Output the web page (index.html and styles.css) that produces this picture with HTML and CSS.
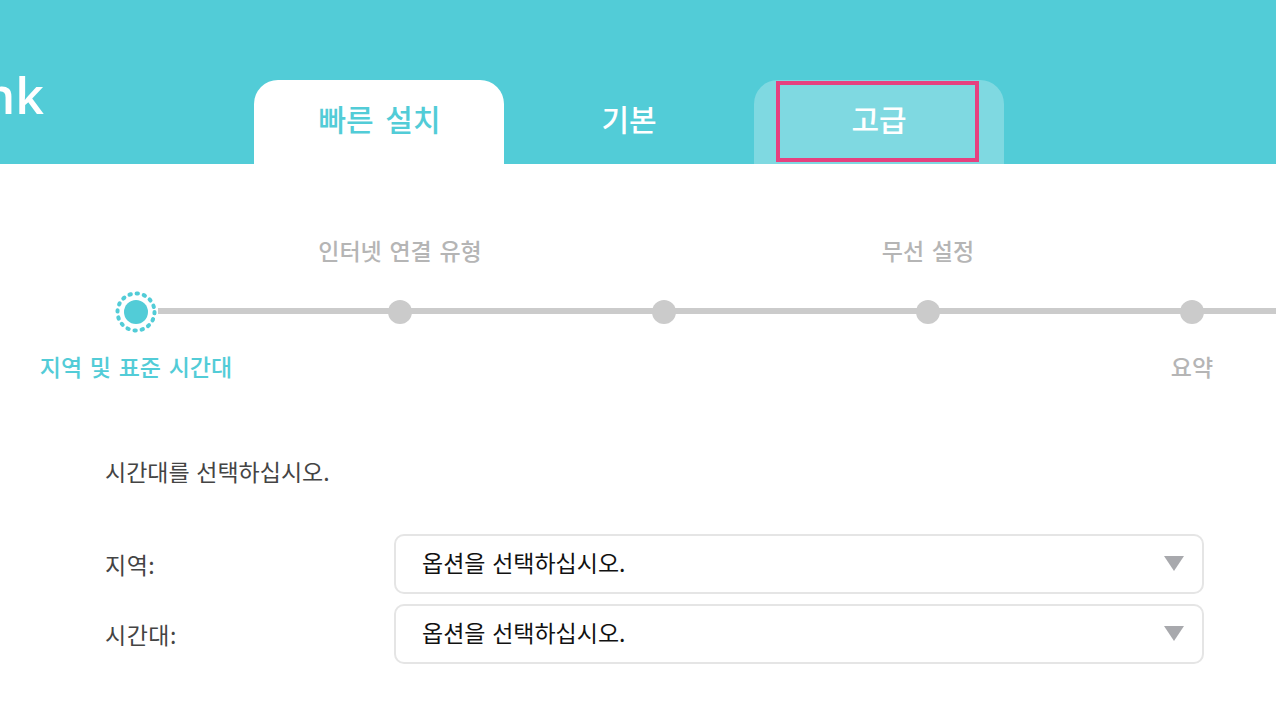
FILE: index.html
```html
<!doctype html>
<html>
    <head>
    <title>빠른 설치</title>
    <link rel="stylesheet" href="styles.css">
    </head>

    <body>
        <div id="header">
            <div class="logo-box"><span class="logo">link</span></div>
            <div class="tab tab-on">빠른 설치</div>
            <div class="tab">기본</div>
            <div class="tab tab-light">
                고급
                <div class="mark"></div>
            </div>
        </div>

        <div id="steps">
            <div class="step step-on">
                <div class="step-top"></div>
                <div class="step-line">
                    <svg class="ring" width="42" height="42" viewBox="0 0 42 42">
                        <circle cx="21" cy="21" r="18.5" fill="none" stroke="#52ccd7" stroke-width="4" stroke-linecap="round" stroke-dasharray="1.4 5.87"/>
                        <circle cx="21" cy="21" r="12" fill="#52ccd7"/>
                    </svg>
                </div>
                <div class="step-bottom">지역 및 표준 시간대</div>
            </div>
            <div class="step">
                <div class="step-top">인터넷 연결 유형</div>
                <div class="step-line"><div class="dot"></div></div>
                <div class="step-bottom"></div>
            </div>
            <div class="step">
                <div class="step-top"></div>
                <div class="step-line"><div class="dot"></div></div>
                <div class="step-bottom"></div>
            </div>
            <div class="step">
                <div class="step-top">무선 설정</div>
                <div class="step-line"><div class="dot"></div></div>
                <div class="step-bottom"></div>
            </div>
            <div class="step">
                <div class="step-top"></div>
                <div class="step-line"><div class="dot"></div></div>
                <div class="step-bottom">요약</div>
            </div>
        </div>

        <div id="form">
            <div class="note">시간대를 선택하십시오.</div>
            <div class="row">
                <div class="row-label">지역:</div>
                <div class="slct">
                    옵션을 선택하십시오.
                    <div class="arrow"></div>
                </div>
            </div>
            <div class="row">
                <div class="row-label">시간대:</div>
                <div class="slct">
                    옵션을 선택하십시오.
                    <div class="arrow"></div>
                </div>
            </div>
        </div>
    </body>
</html>
```

FILE: styles.css
```css
html, body {
    margin: 0;
    height: 100%;
    overflow: hidden;
    background: #fff;
}
body {
    font-family: "Noto Sans CJK KR", "Noto Sans", sans-serif;
    font-size: 23px;
    word-spacing: 1.5px;
}

#header {
    display: flex;
    align-items: flex-end;
    height: 164px;
    background: #52ccd7;
}
.logo-box {
    display: flex;
    justify-content: flex-end;
    align-self: flex-start;
    width: 44px;
    margin-right: 210px;
    padding-top: 58px;
}
.logo {
    font-family: "Open Sans", sans-serif;
    font-size: 50px;
    font-weight: 600;
    line-height: 74px;
    color: #fff;
    white-space: nowrap;
    filter: blur(0.6px);
}
.tab {
    position: relative;
    width: 250px;
    height: 84px;
    line-height: 76px;
    text-align: center;
    font-size: 30px;
    font-weight: 500;
    word-spacing: 5px;
    color: #fff;
    border-radius: 24px 24px 0 0;
}
.tab-on {
    background: #fff;
    color: #52ccd7;
    padding-left: 1px;
    width: 249px;
}
.tab-light {
    background: #7fd9e1;
}
.mark {
    position: absolute;
    left: 22px;
    top: 1px;
    width: 195px;
    height: 73px;
    border: 4px solid #e6417f;
}

#steps {
    display: flex;
    margin: 66px 0 0 4px;
    width: 1320px;
}
.step {
    width: 264px;
    flex: none;
    text-align: center;
    color: #b5b5b5;
    font-weight: 500;
    word-spacing: 2.5px;
}
.step-top, .step-bottom {
    height: 42px;
    line-height: 40px;
    white-space: nowrap;
}
.step-line {
    display: flex;
    align-items: center;
    justify-content: center;
    height: 40px;
    position: relative;
}
.step-line:after {
    content: "";
    position: absolute;
    left: 132px;
    width: 264px;
    height: 6px;
    background: #cbcbcb;
}
.step-on .step-line:after {
    left: 154px;
    width: 242px;
}
.step:last-child .step-line:after {
    width: 132px;
}
.dot {
    width: 24px;
    height: 24px;
    margin-top: 2px;
    border-radius: 50%;
    background: #cbcbcb;
    z-index: 1;
}
.ring {
    margin-top: 2px;
    z-index: 1;
}
.step-on .step-bottom {
    color: #52ccd7;
}
.step-bottom {
    margin-top: 15px;
}
.step-top {
    margin-bottom: 19px;
}

#form {
    padding: 66px 72px 0 105px;
    color: #444;
}
.note {
    height: 34px;
    line-height: 34px;
    margin-bottom: 46px;
}
.row {
    display: flex;
    align-items: center;
    margin-bottom: 10px;
}
.row-label {
    width: 289px;
    flex: none;
    letter-spacing: 0.5px;
}
.slct {
    position: relative;
    flex: 1;
    height: 56px;
    line-height: 52px;
    padding-left: 26px;
    border: 2px solid #e5e5e5;
    border-radius: 10px;
    color: #111;
}
.arrow {
    position: absolute;
    right: 18px;
    top: 20px;
    width: 0;
    height: 0;
    border-left: 10.5px solid transparent;
    border-right: 10.5px solid transparent;
    border-top: 15px solid #a8a9ad;
}
```
